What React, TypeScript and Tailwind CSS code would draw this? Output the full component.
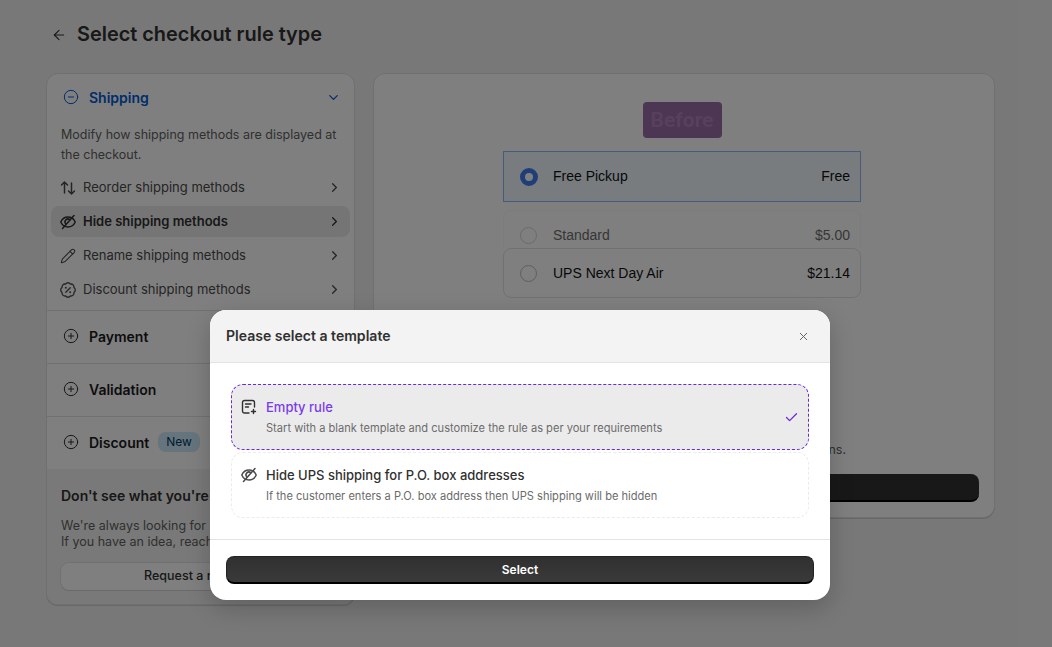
import { ArrowLeft, Check, ChevronDown, ChevronRight, CircleMinus, CirclePlus, Pencil, X } from "lucide-react";

function HideIcon({ className }: { className?: string }) {
    return (
        <svg viewBox="0 0 16 16" fill="none" stroke="currentColor" strokeWidth="1.5" strokeLinecap="round" strokeLinejoin="round" className={className}>
            <path d="M.8 8C2.2 4.8 4.8 3 8 3c3.2 0 5.800 1.800 7.200 5-1.400 3.200-4 5-7.200 5-3.200 0-5.800-1.800-7.200-5Z" />
            <path d="M5.600 9.800A3 3 0 0 1 9.800 5.600" />
            <path d="M14 1.500 2.500 14.500" />
        </svg>
    )
}

function ReorderIcon({ className }: { className?: string }) {
    return (
        <svg viewBox="0 0 16 16" fill="none" stroke="currentColor" strokeWidth="1.5" strokeLinecap="round" strokeLinejoin="round" className={className}>
            <path d="M4.500 13V2M1.500 5l3-3 3 3" />
            <path d="M11.500 3v11M8.500 11l3 3 3-3" />
        </svg>
    )
}

function NoteIcon({ className }: { className?: string }) {
    return (
        <svg viewBox="0 0 16 16" fill="none" stroke="currentColor" strokeWidth="1.400" strokeLinecap="round" strokeLinejoin="round" className={className}>
            <path d="M8 14H3.500A2 2 0 0 1 1.500 12V3.500a2 2 0 0 1 2-2h8a2 2 0 0 1 2 2V8" />
            <path d="M4.500 5h5.500M4.500 8h3" />
            <path d="M12.500 10.500v4M10.500 12.500h4" />
        </svg>
    )
}

function DiscountIcon({ className }: { className?: string }) {
    return (
        <svg viewBox="1 1 22 22" fill="none" stroke="currentColor" strokeWidth="1.800" strokeLinecap="round" strokeLinejoin="round" className={className}>
            <path d="M3.850 8.620a4 4 0 0 1 4.780-4.770 4 4 0 0 1 6.740 0 4 4 0 0 1 4.780 4.780 4 4 0 0 1 0 6.740 4 4 0 0 1-4.770 4.780 4 4 0 0 1-6.750 0 4 4 0 0 1-4.780-4.770 4 4 0 0 1 0-6.760Z" />
            <path d="m15 9-6 6" />
            <path d="M9 9h.01M15 15h.01" strokeWidth="2.600" />
        </svg>
    )
}

const metodos = [
    { nome: "Reorder shipping methods", Icone: ReorderIcon },
    { nome: "Hide shipping methods", Icone: HideIcon, ativo: true },
    { nome: "Rename shipping methods", Icone: Pencil },
    { nome: "Discount shipping methods", Icone: DiscountIcon },
];

function Secao({ nome, novo }: { nome: string; novo?: boolean }) {
    return (
        <div className="h-[53px] flex items-center gap-[10px] px-[16px] pb-[2px] border-t border-[#e3e3e3]">
            <CirclePlus size={16} strokeWidth={1.5} className="text-[#303030]" />
            <span className="text-[14px] font-semibold text-[#1a1a1a]">{nome}</span>
            {novo && <span className="-ml-[1px] h-[20px] px-2 rounded-lg bg-[#cce8fa] text-[12px] leading-[20px] text-[#003a5a]">New</span>}
        </div>
    )
}

function App() {
    return (
        <div className="relative h-[647px] w-[1052px] overflow-hidden bg-[#f1f1f1] font-['Inter',sans-serif]">
            <div className="flex items-center h-[70px] pl-[51px] gap-[10px]">
                <ArrowLeft size={16} strokeWidth={1.6} className="text-[#303030]" />
                <h1 className="text-[19.9px] font-semibold text-[#303030]">Select checkout rule type</h1>
            </div>

            <div className="flex items-start gap-[18px] ml-[46px] mt-[3px]">
                <aside className="w-[309px] h-[532px] rounded-xl bg-white border border-[#e0e0e0] shadow-[0_1px_0_#d0d0d0] overflow-hidden flex flex-col">
                    <div className="h-[46px] flex items-center gap-[10px] pl-[16px] pr-[13px]">
                        <CircleMinus size={16} strokeWidth={1.5} className="text-[#005bd3]" />
                        <span className="text-[14px] font-semibold text-[#005bd3] flex-1">Shipping</span>
                        <ChevronDown size={15} strokeWidth={2} className="text-[#005bd3]" />
                    </div>
                    <p className="px-[14px] pt-[5px] text-[12.5px] leading-[20px] text-[#616161]">
                        Modify how shipping methods are displayed at the checkout.
                    </p>
                    <div className="flex flex-col px-[4px] pt-[7px] pb-[5px] gap-[3px]">
                        {metodos.map(({ nome, Icone, ativo }) => (
                            <div key={nome} className={`h-[31px] flex items-center gap-[7px] pl-[9px] pr-[8px] rounded-lg ${ativo ? "bg-[#ebebeb] font-semibold text-[#303030]" : "text-[#4a4a4a]"}`}>
                                <Icone className="w-[16px] h-[16px] shrink-0" strokeWidth={1.6} />
                                <span className="text-[13px] flex-1">{nome}</span>
                                <ChevronRight size={15} strokeWidth={2} />
                            </div>
                        ))}
                    </div>
                    <Secao nome="Payment" />
                    <Secao nome="Validation" />
                    <Secao nome="Discount" novo />
                    <div className="flex-1 bg-[#f3f3f3] px-[14px] pt-[16px]">
                        <h2 className="text-[14px] font-semibold text-[#303030]">Don't see what you're looking for?</h2>
                        <p className="mt-[12px] text-[12.5px] leading-[16px] text-[#616161] whitespace-nowrap">
                            We're always looking for new ideas.<br />If you have an idea, reach out to us.
                        </p>
                        <button className="block mt-[13px] w-[280px] h-[27px] rounded-lg bg-white shadow-[0_1px_0_#d4d4d4,0_0_0_1px_#e3e3e3] text-[12.5px] font-medium text-[#303030]">Request a new rule</button>
                    </div>
                </aside>

                <main className="w-[622px] h-[445px] rounded-xl bg-white border border-[#e0e0e0] shadow-[0_1px_0_#d0d0d0] flex flex-col items-center pt-[28px] pr-[4px]">
                    <div className="w-[79px] h-[36px] pt-[1px] rounded bg-[#9a6aa8] flex items-center justify-center font-['Roboto',sans-serif] text-[21px] font-bold text-[#ad82bb]">Before</div>
                    <div className="mt-[13px] w-[358px] font-['Liberation_Sans',sans-serif] text-[14px]">
                        <div className="h-[51px] flex items-center border border-[#8ab8ff] bg-[#f0f8ff] pl-[16px] pr-[10px] text-[#111]">
                            <span className="w-[18px] h-[18px] rounded-full border-[5px] border-[#3f7cf0] bg-white" />
                            <span className="ml-[15px] flex-1">Free Pickup</span>
                            <span>Free</span>
                        </div>
                        <div className="mt-[8px] h-[38px] flex items-center pl-[16px] pr-[10px] pt-[11px] text-[#6d6d6d] border-t border-x rounded-t-lg border-[#f8f8f8]">
                            <span className="w-[17px] h-[17px] rounded-full border border-[#d5d5d5]" />
                            <span className="ml-[16px] flex-1">Standard</span>
                            <span>$5.00</span>
                        </div>
                        <div className="h-[50px] flex items-center rounded-lg border border-[#e3e3e3] pl-[16px] pr-[10px] text-[#111]">
                            <span className="w-[17px] h-[17px] rounded-full border border-[#bdbdbd]" />
                            <span className="ml-[16px] flex-1">UPS Next Day Air</span>
                            <span>$21.14</span>
                        </div>
                    </div>
                    <div className="mt-auto w-full pl-[14px] pr-[11px] pb-[15px]">
                        <p className="text-[12.5px] text-[#616161] text-right pr-[133px] whitespace-nowrap">Hide shipping methods based on the customer's cart and address conditions.</p>
                        <button className="block mt-[14px] w-full h-[28px] rounded-lg bg-[#303030] border-b-2 border-black" />
                    </div>
                </main>
            </div>

            <div className="absolute inset-0 bg-black/50 flex justify-center items-start pt-[310px] pr-[12px]">
                <div className="w-[620px] h-[290px] rounded-2xl bg-white overflow-hidden shadow-[0_8px_24px_rgba(0,0,0,0.2)] flex flex-col">
                    <div className="h-[53px] flex items-center justify-between bg-[#f3f3f3] border-b border-[#e3e3e3] pl-[16px] pr-[20px]">
                        <span className="text-[14.05px] font-semibold text-[#303030]">Please select a template</span>
                        <X size={13} strokeWidth={1.8} className="text-[#616161]" />
                    </div>
                    <div className="h-[177px] px-[21px] pt-[21px] border-b border-[#e3e3e3] flex flex-col gap-[2px]">
                        <div className="h-[66px] flex items-center rounded-xl border border-dashed border-[#6d28d9] bg-[#ebebeb] pl-[9px] pr-[9px]">
                            <NoteIcon className="w-[16px] h-[16px] text-[#303030] self-start mt-[14px] shrink-0" />
                            <div className="ml-[9px] flex-1">
                                <p className="text-[13px] font-medium leading-[20px] text-[#7c3aed]">Empty rule</p>
                                <p className="mt-[1px] text-[11.1px] leading-[20px] text-[#6b6b6b]">Start with a blank template and customize the rule as per your requirements</p>
                            </div>
                            <Check size={15} strokeWidth={2} className="text-[#6d28d9]" />
                        </div>
                        <div className="h-[66px] flex items-center rounded-xl border border-dashed border-[#ebebeb] pl-[9px] pr-[9px]">
                            <HideIcon className="w-[16px] h-[16px] text-[#4a4a4a] self-start mt-[14px] shrink-0" />
                            <div className="ml-[9px] flex-1">
                                <p className="text-[13px] font-medium leading-[20px] text-[#303030]">Hide UPS shipping for P.O. box addresses</p>
                                <p className="mt-[1px] text-[11.1px] leading-[20px] text-[#6b6b6b]">If the customer enters a P.O. box address then UPS shipping will be hidden</p>
                            </div>
                        </div>
                    </div>
                    <div className="px-[16px] pt-[16px]">
                        <button className="block w-full h-[28px] rounded-lg bg-gradient-to-b from-[#303030] to-[#3a3a3a] border border-[#222] border-b-2 border-b-black text-[12px] font-semibold text-white">Select</button>
                    </div>
                </div>
            </div>
        </div>
    )
}

export default App;
